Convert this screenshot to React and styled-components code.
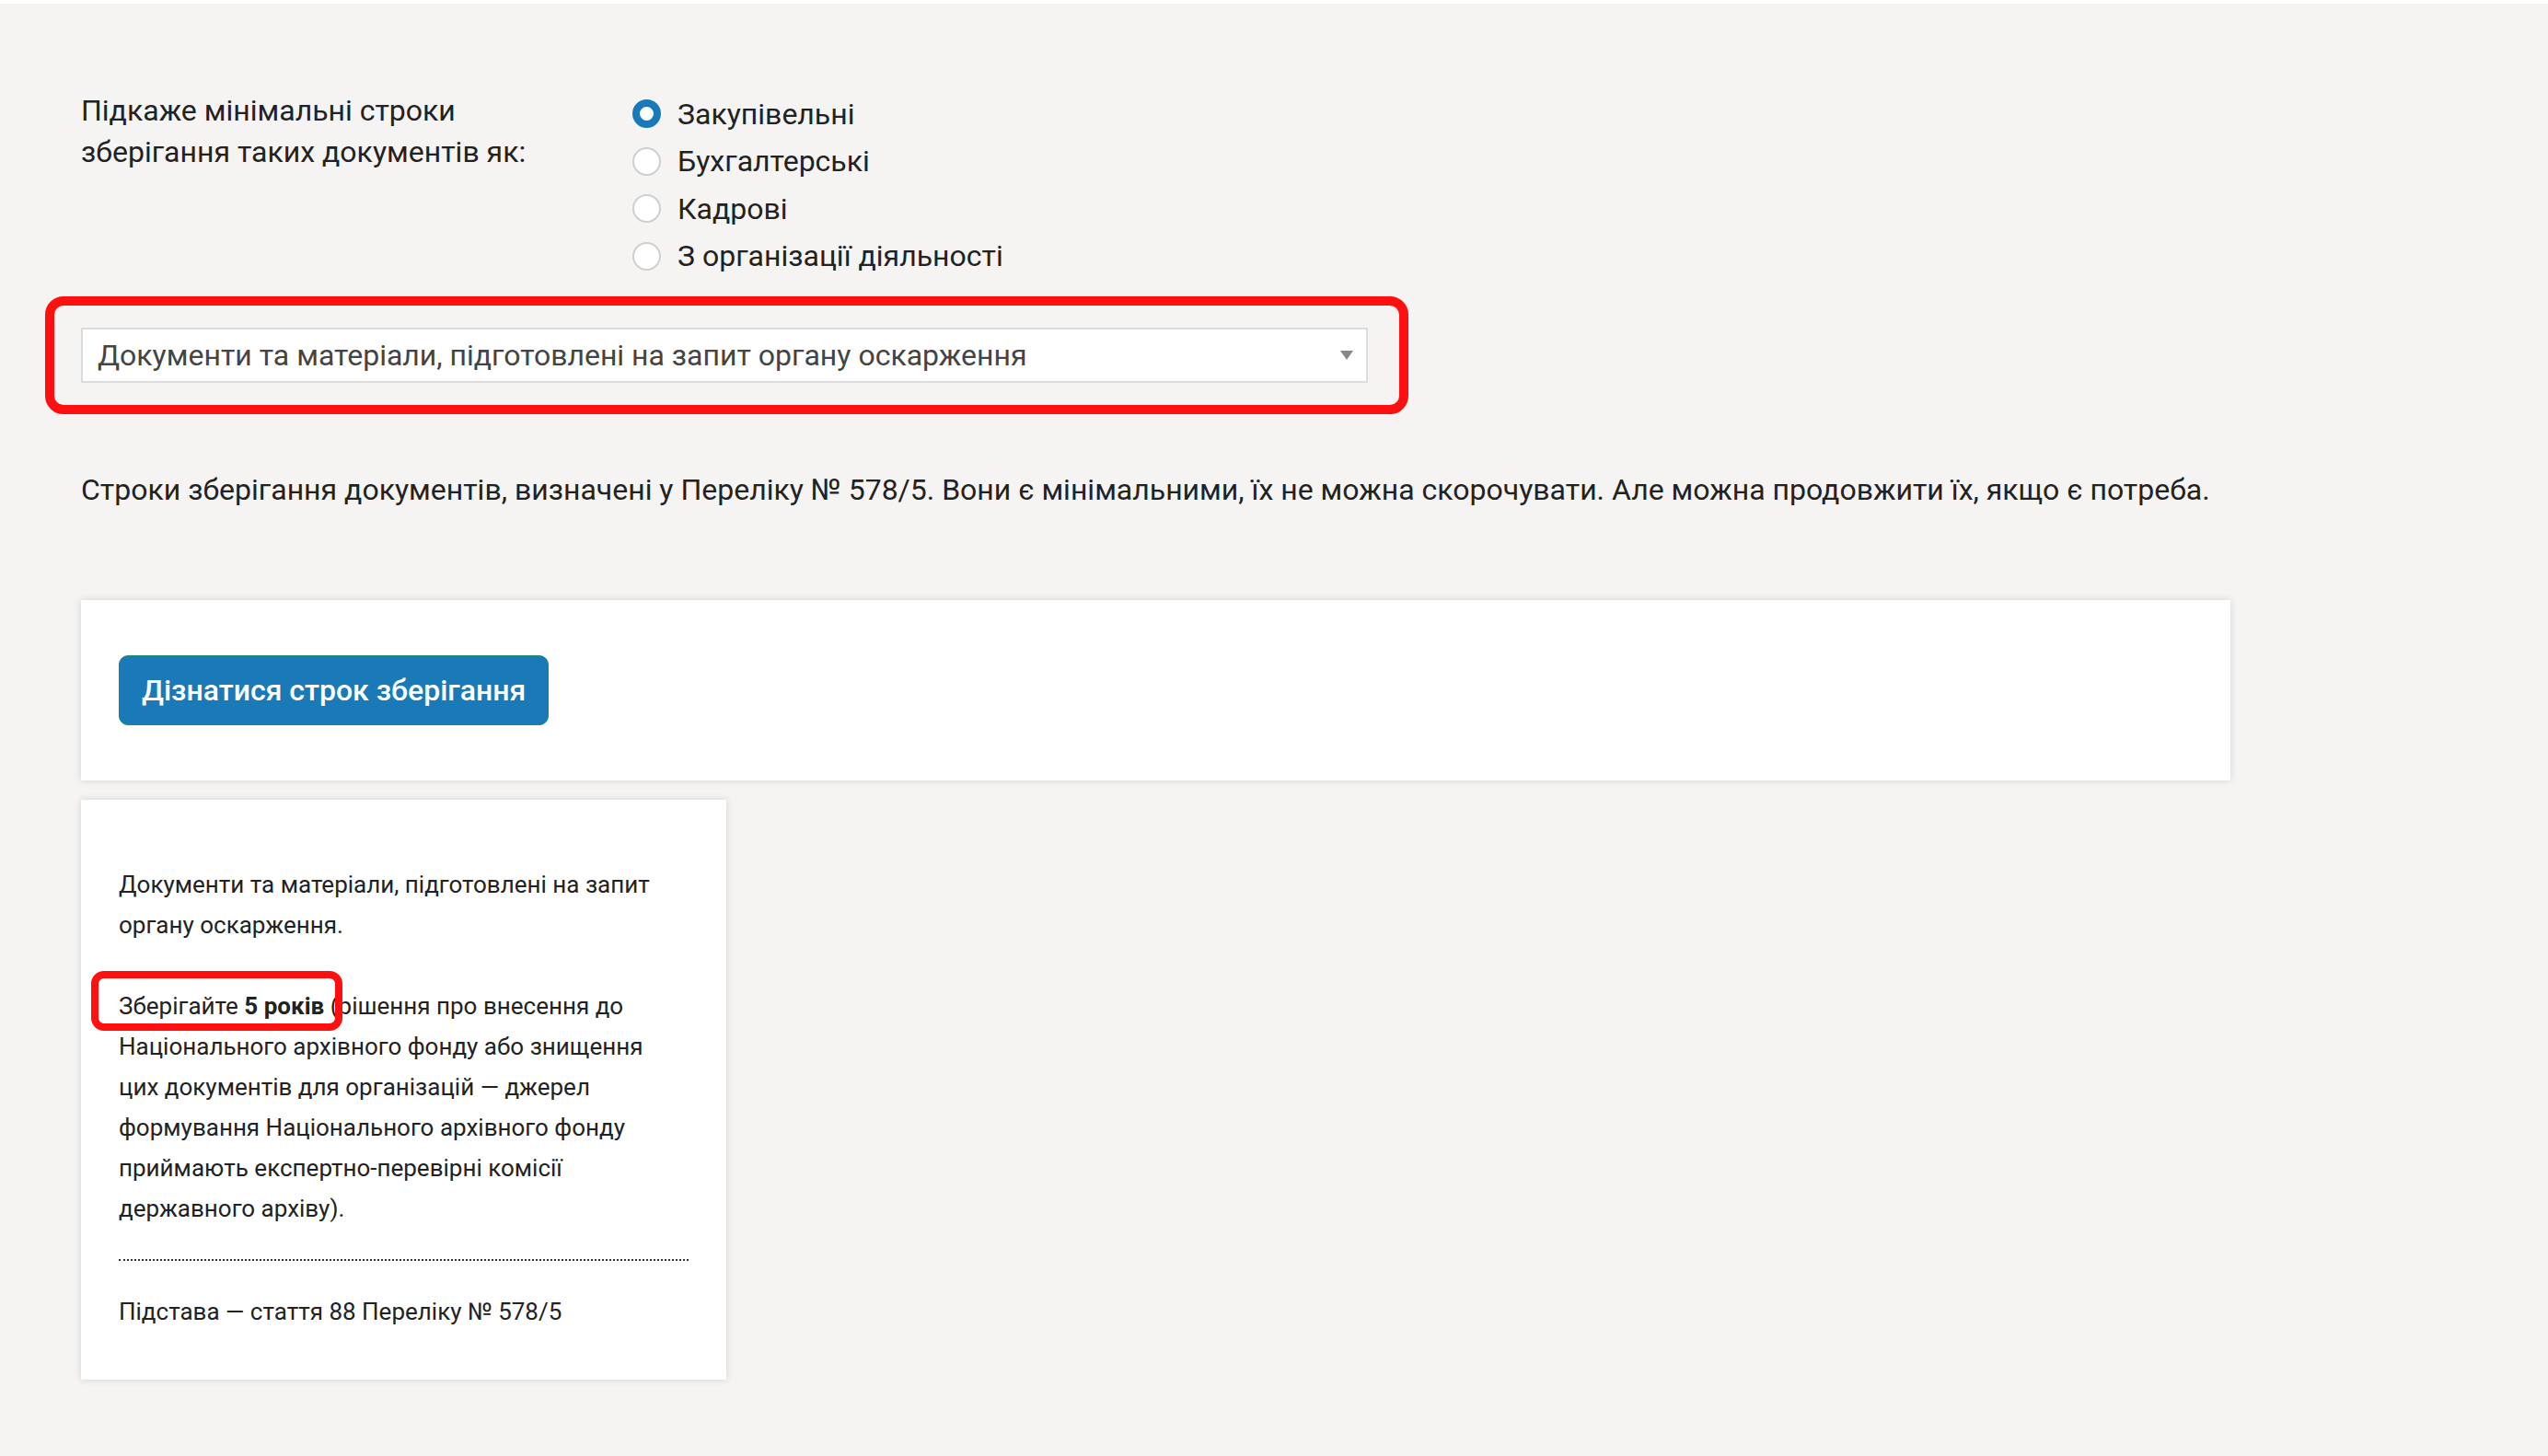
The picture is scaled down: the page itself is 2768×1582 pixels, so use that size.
import React from 'react';
import styled, { createGlobalStyle } from 'styled-components';

const GlobalStyle = createGlobalStyle`
  html, body {
    margin: 0;
    padding: 0;
    background: #ffffff;
  }
  body {
    font-family: Roboto, "Noto Sans", "Liberation Sans", sans-serif;
    color: #222;
  }
`;

const Page = styled.div`
  background: #f5f4f2;
  margin-top: 4px;
  min-height: 1578px;
  padding: 93px 0 0 88px;
  box-sizing: border-box;
`;

const ChooserRow = styled.div`
  display: grid;
  grid-template-columns: 599px auto;
  align-items: start;
`;

const ChooserLabel = styled.div`
  font-size: 32px;
  line-height: 45px;
  margin-top: 1px;
`;

const RadioList = styled.div`
  display: flex;
  flex-direction: column;
  margin-top: 1px;
`;

const RadioRow = styled.label`
  display: flex;
  align-items: center;
  gap: 18px;
  height: 51.5px;
  font-size: 32px;
  color: #222;
`;

const RadioDot = styled.span`
  width: 31px;
  height: 31px;
  border-radius: 50%;
  box-sizing: border-box;
  background: #fff;
  border: ${({ checked }) => (checked ? '8px solid #1a7ab8' : '2px solid #cfcfcf')};
  flex-shrink: 0;
`;

const SelectWrap = styled.div`
  position: relative;
  width: 1398px;
  margin-top: 52px;

  &::after {
    content: '';
    position: absolute;
    top: -34px;
    bottom: -34px;
    left: -39px;
    right: -44px;
    border: 10px solid #ff1010;
    border-radius: 20px;
    pointer-events: none;
  }
`;

const SelectBox = styled.div`
  display: flex;
  align-items: center;
  justify-content: space-between;
  height: 60px;
  box-sizing: border-box;
  background: #fff;
  border: 2px solid #dcdcdc;
  padding: 0 14px 0 16px;
  font-size: 32px;
  color: #444;
`;

const Caret = styled.span`
  width: 0;
  height: 0;
  border-left: 7px solid transparent;
  border-right: 7px solid transparent;
  border-top: 10px solid #888;
`;

const Note = styled.p`
  margin: 94px 0 0;
  font-size: 32px;
  line-height: 44px;
  color: #222;
`;

const Panel = styled.div`
  background: #fff;
  box-shadow: 0 0 8px rgba(0, 0, 0, 0.14);
  box-sizing: border-box;
`;

const ActionPanel = styled(Panel)`
  width: 2335px;
  margin-top: 98px;
  padding: 60px 41px;
`;

const Button = styled.button`
  height: 76px;
  padding: 0 24px;
  background: #1a7ab8;
  border: 1px solid #22876f;
  border-radius: 10px;
  color: #fff;
  font-family: inherit;
  font-size: 32px;
  font-weight: 500;
  cursor: pointer;
`;

const ResultPanel = styled(Panel)`
  width: 701px;
  margin-top: 21px;
  padding: 70px 41px 52px;
  font-size: 26px;
  line-height: 44px;
  color: #222;
`;

const ResultText = styled.p`
  margin: 0 0 44px;
  &:last-of-type {
    margin-bottom: 0;
  }
`;

const Highlight = styled.span`
  position: relative;
  display: inline-block;

  &::after {
    content: '';
    position: absolute;
    top: -16px;
    bottom: -5px;
    left: -30px;
    right: -20px;
    border: 8px solid #ff1010;
    border-radius: 14px;
    pointer-events: none;
  }
`;

const Divider = styled.hr`
  border: 0;
  border-top: 2px dotted #333;
  margin: 33px 0;
`;

const Basis = styled.div`
  font-size: 26px;
  line-height: 44px;
`;

const options = ['Закупівельні', 'Бухгалтерські', 'Кадрові', 'З організації діяльності'];

const App = () => {
  const selected = 0;
  return (
    <>
      <GlobalStyle />
      <Page>
        <ChooserRow>
          <ChooserLabel>
            Підкаже мінімальні строки
            <br />
            зберігання таких документів як:
          </ChooserLabel>
          <RadioList>
            {options.map((option, index) => (
              <RadioRow key={option}>
                <RadioDot checked={index === selected} />
                {option}
              </RadioRow>
            ))}
          </RadioList>
        </ChooserRow>

        <SelectWrap>
          <SelectBox>
            <span>Документи та матеріали, підготовлені на запит органу оскарження</span>
            <Caret />
          </SelectBox>
        </SelectWrap>

        <Note>
          Строки зберігання документів, визначені у Переліку № 578/5. Вони є мінімальними, їх не можна
          скорочувати. Але можна продовжити їх, якщо є потреба.
        </Note>

        <ActionPanel>
          <Button>Дізнатися строк зберігання</Button>
        </ActionPanel>

        <ResultPanel>
          <ResultText>Документи та матеріали, підготовлені на запит органу оскарження.</ResultText>
          <ResultText>
            <Highlight>
              Зберігайте <b>5 років</b>
            </Highlight>{' '}
            (рішення про внесення до Національного архівного фонду або знищення цих документів для
            організацій — джерел формування Національного архівного фонду приймають
            експертно-перевірні комісії державного архіву).
          </ResultText>
          <Divider />
          <Basis>Підстава — стаття 88 Переліку № 578/5</Basis>
        </ResultPanel>
      </Page>
    </>
  );
};

export default App;
